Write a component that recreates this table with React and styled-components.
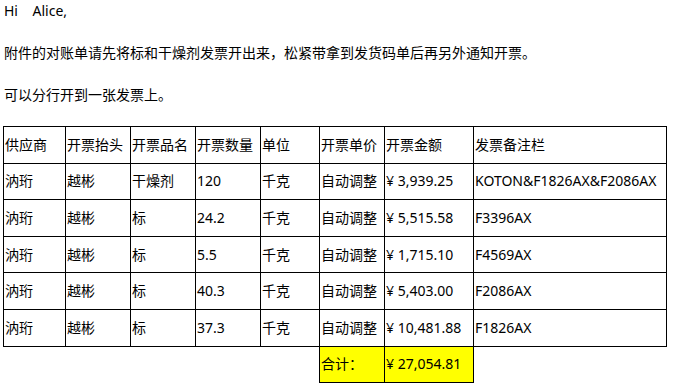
import React from 'react'
import styled, { createGlobalStyle } from 'styled-components'

const GlobalStyle = createGlobalStyle`
  html, body {
    margin: 0;
    padding: 0;
    background: #fff;
  }
  body {
    font-family: "Noto Sans", "Noto Sans CJK SC", sans-serif;
    font-size: 14px;
    color: #000;
  }
`;

const rows = [
  { supplier: '汭珩', title: '越彬', item: '干燥剂', qty: '120', unit: '千克', price: '自动调整', amount: '¥ 3,939.25', note: 'KOTON&F1826AX&F2086AX' },
  { supplier: '汭珩', title: '越彬', item: '标', qty: '24.2', unit: '千克', price: '自动调整', amount: '¥ 5,515.58', note: 'F3396AX' },
  { supplier: '汭珩', title: '越彬', item: '标', qty: '5.5', unit: '千克', price: '自动调整', amount: '¥ 1,715.10', note: 'F4569AX' },
  { supplier: '汭珩', title: '越彬', item: '标', qty: '40.3', unit: '千克', price: '自动调整', amount: '¥ 5,403.00', note: 'F2086AX' },
  { supplier: '汭珩', title: '越彬', item: '标', qty: '37.3', unit: '千克', price: '自动调整', amount: '¥ 10,481.88', note: 'F1826AX' },
];

const headers = ['供应商', '开票抬头', '开票品名', '开票数量', '单位', '开票单价', '开票金额', '发票备注栏'];
const widths = [62, 65, 65, 65, 59, 65, 89, 193];

const Mail = () => {
  return (
    <Page>
      <GlobalStyle />
      <Para>Hi&nbsp;&nbsp;&nbsp; Alice,</Para>
      <Para>附件的对账单请先将标和干燥剂发票开出来，松紧带拿到发货码单后再另外通知开票。</Para>
      <Para>可以分行开到一张发票上。</Para>

      <Sheet>
        <colgroup>
          {widths.map((w, i) => <col key={i} style={{ width: w }} />)}
        </colgroup>
        <tbody>
          <Row>
            {headers.map(h => <Cell key={h}>{h}</Cell>)}
          </Row>
          {rows.map((r, i) => (
            <Row key={i}>
              <Cell>{r.supplier}</Cell>
              <Cell>{r.title}</Cell>
              <Cell>{r.item}</Cell>
              <Cell>{r.qty}</Cell>
              <Cell>{r.unit}</Cell>
              <Cell>{r.price}</Cell>
              <Cell>{r.amount}</Cell>
              <Cell>{r.note}</Cell>
            </Row>
          ))}
          <Row>
            <Cell blank colSpan={5} />
            <Cell highlight>合计：</Cell>
            <Cell highlight>¥ 27,054.81</Cell>
            <Cell blank />
          </Row>
        </tbody>
      </Sheet>
    </Page>
  )
}

const Page = styled.div`
  padding: 0 3px;
`;

const Para = styled.p`
  margin: 0 0 21px;
  padding-left: 1px;
  line-height: 21px;
  white-space: pre;
`;

const Sheet = styled.table`
  border-collapse: collapse;
  table-layout: fixed;
  width: 663px;
`;

const Row = styled.tr`
  height: 36.6px;
`;

const Cell = styled.td`
  border: ${p => (p.blank ? 'none' : '1px solid #000')};
  background: ${p => (p.highlight ? '#ffff00' : 'transparent')};
  padding: 0 1px;
  vertical-align: middle;
  white-space: nowrap;
  line-height: 20px;
`;

export default Mail
